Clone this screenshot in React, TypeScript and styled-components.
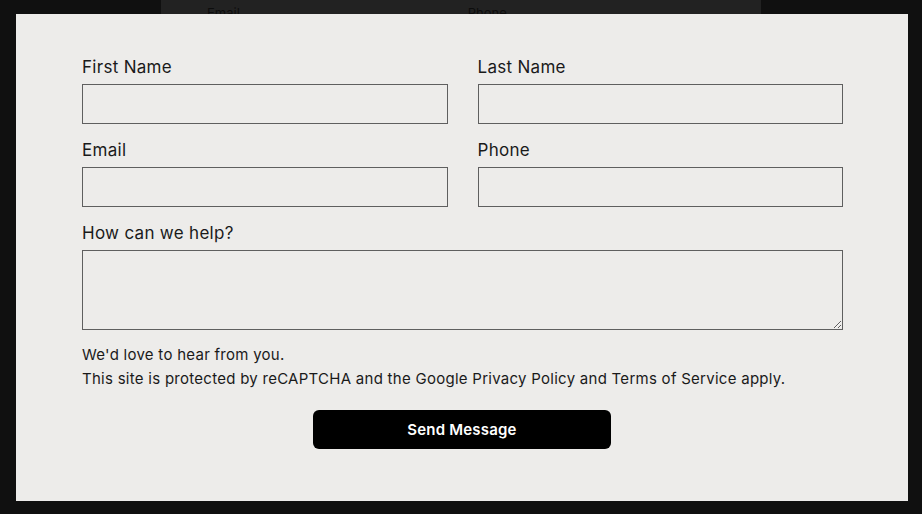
import React from "react";
import styled, { createGlobalStyle } from "styled-components";

const GlobalStyle = createGlobalStyle`
  html, body {
    margin: 0;
    padding: 0;
    background: #101010;
  }
  body {
    font-family: "Inter", "Noto Sans", sans-serif;
  }
`;

const Page = styled.div`
  position: relative;
  width: 922px;
  height: 514px;
  overflow: hidden;
  background: #101010;
`;

// the page behind the overlay, only the top of its form is visible
const Backdrop = styled.div`
  margin: 0 auto;
  width: 600px;
  height: 40px;
  background: #222222;
  display: flex;
  gap: 228px;
  padding: 5px 0 0 46px;
  box-sizing: border-box;
  color: #0d0d0d;
  font-size: 13px;
`;

const Modal = styled.div`
  position: absolute;
  top: 14px;
  left: 16px;
  width: 892px;
  height: 487px;
  box-sizing: border-box;
  background: #edecea;
  padding: 42px 65px 0 66px;
`;

const Form = styled.form`
  display: flex;
  flex-direction: column;
  gap: 15px;
`;

const Row = styled.div`
  display: grid;
  grid-template-columns: 1fr 1fr;
  column-gap: 30px;
`;

const Field = styled.label`
  display: flex;
  flex-direction: column;
  gap: 6px;
`;

const LabelText = styled.span`
  font-size: 17px;
  line-height: 22px;
  color: #1a1a1a;
  letter-spacing: 0.3px;
`;

const Input = styled.input`
  height: 40px;
  box-sizing: border-box;
  border: 1px solid #5f5f5f;
  background: transparent;
  border-radius: 0;
  outline: none;
  padding: 0 10px;
  font: inherit;
`;

const TextArea = styled.textarea`
  height: 80px;
  box-sizing: border-box;
  border: 1px solid #5f5f5f;
  background: transparent;
  border-radius: 0;
  outline: none;
  padding: 8px 10px;
  font: inherit;
  resize: vertical;
`;

const Note = styled.div`
  margin-top: -2px;
  font-size: 15px;
  line-height: 24px;
  color: #1a1a1a;
  letter-spacing: 0.27px;
`;

const Actions = styled.div`
  display: flex;
  justify-content: center;
  margin-top: 4px;
  padding-right: 1px;
`;

const SendButton = styled.button`
  width: 298px;
  height: 39px;
  border: 0;
  border-radius: 6px;
  background: #000;
  color: #fff;
  font-family: "Inter", "Noto Sans", sans-serif;
  font-weight: 600;
  font-size: 15px;
  letter-spacing: 0.2px;
  cursor: pointer;
`;

export default function App() {
  return (
    <Page>
      <GlobalStyle />
      <Backdrop>
        <span>Email</span>
        <span>Phone</span>
      </Backdrop>
      <Modal>
        <Form onSubmit={(e) => e.preventDefault()}>
          <Row>
            <Field>
              <LabelText>First Name</LabelText>
              <Input type="text" />
            </Field>
            <Field>
              <LabelText>Last Name</LabelText>
              <Input type="text" />
            </Field>
          </Row>
          <Row>
            <Field>
              <LabelText>Email</LabelText>
              <Input type="email" />
            </Field>
            <Field>
              <LabelText>Phone</LabelText>
              <Input type="tel" />
            </Field>
          </Row>
          <Field>
            <LabelText>How can we help?</LabelText>
            <TextArea />
          </Field>
          <Note>
            We'd love to hear from you.
            <br />
            This site is protected by reCAPTCHA and the Google Privacy Policy
            and Terms of Service apply.
          </Note>
          <Actions>
            <SendButton type="submit">Send Message</SendButton>
          </Actions>
        </Form>
      </Modal>
    </Page>
  );
}
